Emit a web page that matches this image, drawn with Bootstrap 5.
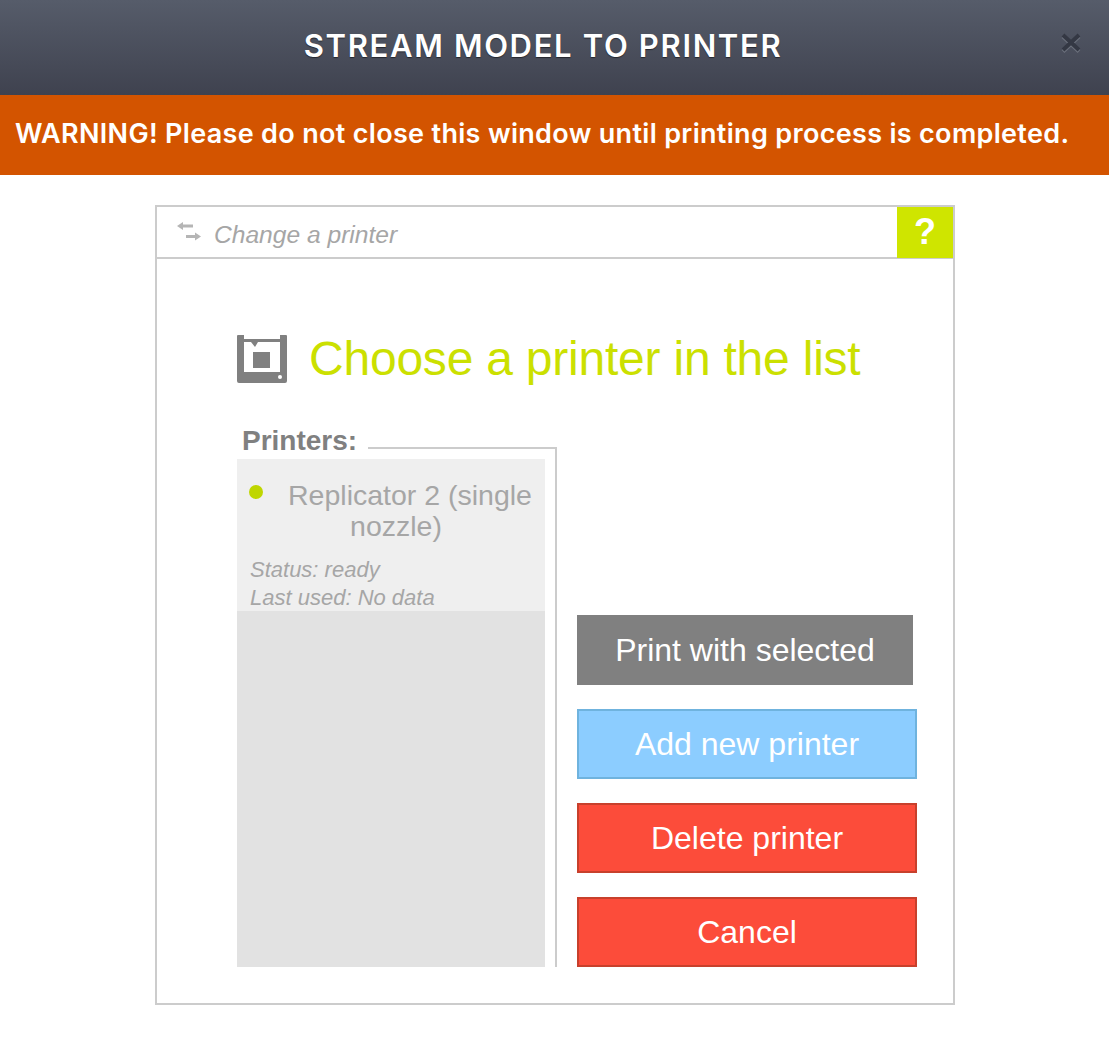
<!doctype html>
<html lang="en"><head><meta charset="utf-8"><title>Stream model to printer</title>
<link rel="stylesheet" href="https://cdn.jsdelivr.net/npm/bootstrap@5.3.0/dist/css/bootstrap.min.css">
<style>
body{background:#fff;font-family:"Liberation Sans",Arial,sans-serif;}
.top-head{height:95px;background:linear-gradient(#565c6a,#3f424f);padding-right:27px;}
.top-title{padding-left:26px;margin:-4px 0 0;font:600 31px/1 Inter,sans-serif;color:#fff;text-shadow:0 1px 1px rgba(0,0,0,.5);letter-spacing:1.66px;}
.top-close{width:22px;height:22px;padding:0;border:0;background:none;margin-top:-13px;}
.warn-bar{height:80px;background:#d35400;color:#fff;font:600 27px/1 Inter,sans-serif;letter-spacing:.32px;padding:0 0 3px 15px;white-space:nowrap;}
.panel-box{width:800px;height:800px;margin:30px auto 0 155px;border:2px solid #ccc;}
.panel-top{height:52px;border-bottom:2px solid #ccc;}
.change-link{padding-left:20px;gap:13px;color:#a6a6a6;font-style:italic;font-size:24.6px;}
.change-link span{padding-top:7px;}
.help-box{width:56px;margin-bottom:-1px;background:#cfe500;color:#fff;font-size:36px;font-weight:700;line-height:50px;text-align:center;}
.panel-body-area{padding:75px 0 0 80px;}
.choose-line{gap:22px;height:50px;margin-bottom:42px;}
.choose-title{color:#cbe000;font-size:48px;letter-spacing:-.22px;line-height:1;margin:0;font-weight:400;}
.printer-set{width:320px;height:541px;border:0;border-top:2px solid #ccc;border-right:2px solid #ccc;padding:0 10px 0 0;margin:0;min-width:0;}
.printer-set legend{float:none;width:auto;margin:0;padding:0 11px 14px 5px;font-size:28px;font-weight:700;line-height:30px;color:#808080;}
.printer-list{background:#e2e2e2;flex:1;margin-top:-11px;}
.printer-item{background:#efefef;height:152px;padding:21px 0 0 10px;color:#a6a6a6;}
.state-dot{width:14px;height:14px;border-radius:50%;background:#bfd600;margin:5px 12px 0 2px;}
.printer-name{font-size:28.5px;line-height:31px;text-align:center;}
.printer-meta{font-style:italic;font-size:22px;line-height:28px;margin:14px 0 0 3px;}
.action-col{gap:24px;padding-left:20px;}
.act{height:70px;border-radius:0;color:#fff;font-size:32px;line-height:1;padding:0;border-width:2px;border-style:solid;width:340px;}
.act:hover{color:#fff;}
.act-grey{background:#808080;border:0;width:336px;}
.act-blue{background:#8ccdff;border-color:#6fb3de;}
.act-red{background:#fc4c3a;border-color:#c8402c;}
</style></head>
<body>
<header class="top-head d-flex align-items-center">
<h1 class="top-title flex-grow-1 text-center">STREAM MODEL TO PRINTER</h1>
<button class="top-close" type="button" aria-label="Close"><svg width="22" height="22" viewBox="0 0 22 22"><path d="M3 3l16 15M19 3L3 18" stroke="#6b707c" stroke-width="4" transform="translate(0 1.5)"/><path d="M3 3l16 15M19 3L3 18" stroke="#343844" stroke-width="4"/></svg></button>
</header>
<div class="warn-bar d-flex align-items-center">WARNING! Please do not close this window until printing process is completed.</div>
<main class="panel-box">
<div class="panel-top d-flex justify-content-between">
<div class="change-link d-flex align-items-center"><svg width="24" height="20" viewBox="0 0 24 20"><path d="M0 4l6-4v2.5h10v3H6V8zM24 14.5l-6-4V13H9v3h9v2.5z" fill="#b5b5b5"/></svg><span>Change a printer</span></div>
<div class="help-box">?</div>
</div>
<div class="panel-body-area">
<div class="choose-line d-flex align-items-center">
<svg width="50" height="48" viewBox="0 0 50 48"><path fill="#808080" d="M1 0h6v37h36V0h6a1 1 0 0 1 1 1v45a2 2 0 0 1-2 2H2a2 2 0 0 1-2-2V1a1 1 0 0 1 1-1z"/><path fill="#808080" d="M7 4h36v3H21l-3 5-4-5H7z"/><rect x="16" y="17" width="17" height="16" fill="#808080"/><circle cx="43" cy="42" r="2" fill="#fff"/></svg>
<h2 class="choose-title">Choose a printer in the list</h2>
</div>
<div class="d-flex">
<fieldset class="printer-set d-flex flex-column">
<legend>Printers:</legend>
<div class="printer-list d-flex flex-column">
<div class="printer-item">
<span class="state-dot float-start"></span>
<div class="printer-name">Replicator 2 (single nozzle)</div>
<div class="printer-meta">Status: ready<br>Last used: No data</div>
</div>
</div>
</fieldset>
<div class="action-col d-flex flex-column justify-content-end">
<button class="btn act act-grey" type="button">Print with selected</button>
<button class="btn act act-blue" type="button">Add new printer</button>
<button class="btn act act-red" type="button">Delete printer</button>
<button class="btn act act-red" type="button">Cancel</button>
</div>
</div>
</div>
</main>
<script src="https://cdn.jsdelivr.net/npm/bootstrap@5.3.0/dist/js/bootstrap.bundle.min.js"></script>
</body></html>
